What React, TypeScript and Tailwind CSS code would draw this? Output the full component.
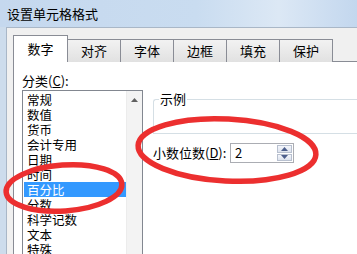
import React from 'react';

const tabs = ['数字', '对齐', '字体', '边框', '填充', '保护'];
const categories = ['常规', '数值', '货币', '会计专用', '日期', '时间', '百分比', '分数', '科学记数', '文本', '特殊'];

const App = () => {
    return (
        <div
            className="relative w-[357px] h-[254px] overflow-hidden bg-[#cddcec] text-[#000]"
            style={{ fontFamily: '"Noto Sans CJK SC", "Noto Sans", sans-serif' }}
        >
            {/* Title bar */}
            <div className="h-[27px] flex items-center pl-[7px] text-[13px] bg-[linear-gradient(90deg,#c5d8ee_0%,#c9dcf0_55%,#dce8f5_78%,#c3d7ee_100%)]">
                设置单元格格式
            </div>

            {/* Dialog body */}
            <div className="ml-[6px] h-[227px] bg-[#f0f0f0] border-l border-t border-[#a9b7c7] pl-[6px] pt-[7px] flex flex-col">
                {/* Tabs */}
                <div className="flex items-end h-[27px] relative z-10">
                    {tabs.map((t, i) =>
                        i === 0 ? (
                            <div
                                key={t}
                                className="w-[55px] h-[27px] bg-white border border-b-0 border-[#898c95] flex items-center justify-center text-[13px] pb-[1px]"
                            >
                                {t}
                            </div>
                        ) : (
                            <div
                                key={t}
                                className="w-[54px] h-[23px] -ml-px bg-[linear-gradient(#f2f2f2,#e1e1e1)] border border-[#898c95] border-b-0 flex items-center justify-center text-[13px]"
                            >
                                {t}
                            </div>
                        )
                    )}
                </div>

                {/* Panel */}
                <div className="flex-1 bg-white border-l border-t border-[#898c95] -mt-px flex pl-[8px]">
                    {/* Category list */}
                    <div className="flex flex-col w-[121px]">
                        <div className="text-[13px] leading-[14px] mt-[12px]">
                            分类(<span className="underline">C</span>):
                        </div>
                        <div className="mt-[2px] h-[170px] border border-[#828790] flex">
                            <div className="flex-1 flex flex-col pt-[1px] pl-[1px]">
                                {categories.map((c) => (
                                    <div
                                        key={c}
                                        className={
                                            c === '百分比'
                                                ? 'h-[15px] leading-[15px] text-[12.5px] pl-[3px] bg-[#3399ff] text-white'
                                                : 'h-[15px] leading-[15px] text-[12.5px] pl-[3px]'
                                        }
                                    >
                                        {c}
                                    </div>
                                ))}
                            </div>
                            <div className="w-[16px] bg-[#f3f3f3] border-l border-[#ececec] flex justify-center pt-[7px]">
                                <svg width="7" height="4" viewBox="0 0 7 4">
                                    <path d="M0 4 L3.5 0 L7 4 Z" fill="#606060" />
                                </svg>
                            </div>
                        </div>
                    </div>

                    {/* Right side */}
                    <div className="flex flex-col ml-[10px] flex-1">
                        <div className="relative mt-[37px] h-[35px] border border-r-0 border-[#d5dfe5] rounded-tl-[3px]">
                            <span className="absolute -top-[9px] left-[5px] bg-white px-px text-[13px] leading-[16px]">示例</span>
                        </div>
                        <div className="flex items-center mt-[9px] h-[20px]">
                            <span className="text-[13px] leading-[16px] w-[77px]">
                                小数位数(<span className="underline">D</span>):
                            </span>
                            <div className="w-[64px] h-[20px] border border-[#abadb3] flex">
                                <span className="flex-1 pl-[4px] text-[13px] leading-[18px]">2</span>
                                <div className="w-[16px] flex flex-col gap-px py-px pr-px">
                                    <div className="flex-1 bg-[linear-gradient(#f4f6fb,#dde3ee)] border border-[#b8c0cf] flex items-center justify-center">
                                        <svg width="7" height="4" viewBox="0 0 7 4">
                                            <path d="M0 4 L3.5 0 L7 4 Z" fill="#4d5f8c" />
                                        </svg>
                                    </div>
                                    <div className="flex-1 bg-[linear-gradient(#f4f6fb,#dde3ee)] border border-[#b8c0cf] flex items-center justify-center">
                                        <svg width="7" height="4" viewBox="0 0 7 4">
                                            <path d="M0 0 L3.5 4 L7 0 Z" fill="#4d5f8c" />
                                        </svg>
                                    </div>
                                </div>
                            </div>
                        </div>
                    </div>
                </div>
            </div>

            {/* Red hand-drawn circles */}
            <svg className="absolute inset-0 pointer-events-none" width="357" height="254" viewBox="0 0 357 254">
                <ellipse cx="64" cy="188" rx="58" ry="23" fill="none" stroke="#ec2f2f" strokeWidth="5.5" transform="rotate(-4 64 188)" />
                <ellipse cx="227" cy="150" rx="89" ry="31" fill="none" stroke="#ec2f2f" strokeWidth="5.5" transform="rotate(3 227 150)" />
            </svg>
        </div>
    );
};

export default App;
